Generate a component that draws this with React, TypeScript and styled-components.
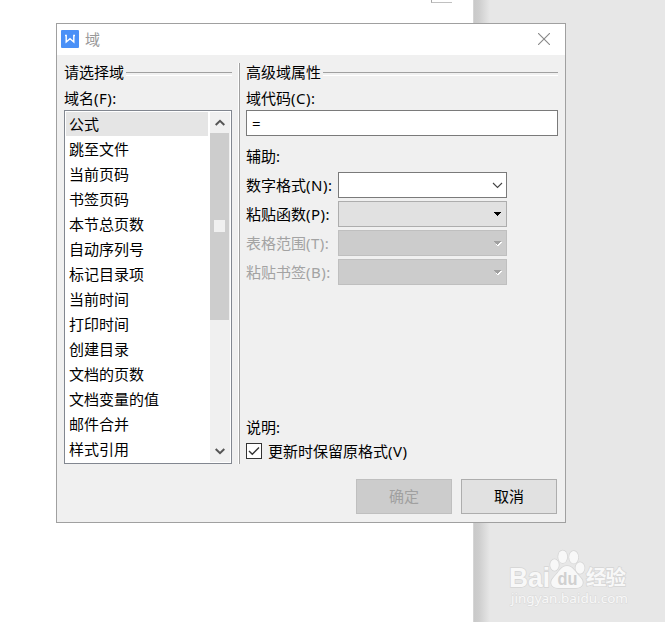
import React from 'react';
import styled, { createGlobalStyle } from 'styled-components';

const GlobalStyle = createGlobalStyle`
  * { box-sizing: border-box; }
  body {
    margin: 0;
    overflow: hidden;
    font-family: "Noto Sans", "Noto Sans CJK SC", sans-serif;
    font-size: 15px;
    color: #000;
  }
`;

const Desktop = styled.main`
  position: relative;
  display: flex;
  width: 665px;
  height: 622px;
  overflow: hidden;
  background: #e7e7e7;
`;

const Paper = styled.div`
  width: 473px;
  background: #fff;
`;

const PageCorner = styled.div`
  width: 21px;
  height: 3px;
  margin-left: 431px;
  border-left: 1px solid #a8a8a8;
  border-bottom: 1px solid #c0c0c0;
`;

const PaperShadow = styled.div`
  width: 17px;
  background: linear-gradient(to right, #d5d5d5 0 1px, #c9c9c9 1px, #cecece 6px, #e7e7e7);
`;

const Dialog = styled.section`
  position: absolute;
  left: 56px;
  top: 23px;
  width: 510px;
  height: 500px;
  border: 1px solid #a0a0a0;
  background: #f0f0f0;
`;

const TitleBar = styled.header`
  display: flex;
  align-items: center;
  height: 31px;
  padding: 0 15px 1px 4px;
  background: #fff;
  color: #999;
`;

const Title = styled.span`
  flex: 1;
  margin-left: 6px;
  line-height: 20px;
`;

const Body = styled.div`
  display: flex;
  height: 409px;
  padding: 8px 7px 0;
`;

const ListColumn = styled.div`
  width: 168px;
`;

const Divider = styled.div`
  width: 2px;
  height: 401px;
  margin: 0 6px;
  border-left: 1px solid #fff;
  border-right: 1px solid #a0a0a0;
`;

const DetailColumn = styled.div`
  width: 312px;
`;

const GroupHeading = styled.div`
  display: flex;
  height: 20px;
  line-height: 18px;
  white-space: nowrap;

  &::after {
    content: '';
    flex: 1;
    height: 2px;
    margin: 9px 0 0 2px;
    border-top: 1px solid #a0a0a0;
    border-bottom: 1px solid #fff;
  }
`;

const Label = styled.div<{ $top?: number; $bottom?: number; $muted?: boolean }>`
  height: 20px;
  margin-top: ${({ $top = 0 }) => $top}px;
  margin-bottom: ${({ $bottom = 0 }) => $bottom}px;
  line-height: 20px;
  white-space: nowrap;
  color: ${({ $muted }) => ($muted ? '#a3a3a3' : '#000')};
`;

const Hotkey = styled.span`
  letter-spacing: 0.5px;
`;

const ListBox = styled.div`
  display: flex;
  justify-content: space-between;
  height: 354px;
  padding: 1px;
  border: 1px solid #828790;
  background: #fff;
`;

const Items = styled.ul`
  width: 142px;
  margin: 0;
  padding: 0;
  list-style: none;
`;

const Item = styled.li<{ $selected: boolean }>`
  height: 25px;
  padding-left: 3px;
  line-height: 24px;
  white-space: nowrap;
  background: linear-gradient(${({ $selected }) => ($selected ? '#e5e5e5' : '#fff')} 24px, #fff 24px);
`;

const ScrollBar = styled.div`
  display: flex;
  flex-direction: column;
  width: 20px;
  height: 350px;
  background: #f0f0f0;
`;

const ScrollButton = styled.div`
  display: flex;
  align-items: center;
  justify-content: center;
  width: 19px;
  height: 21px;
`;

const Thumb = styled.div`
  display: flex;
  justify-content: center;
  width: 19px;
  height: 187px;
  margin-bottom: 120px;
  padding-top: 87px;
  background: #cdcdcd;
`;

const Grip = styled.div`
  width: 11px;
  height: 12px;
  background: #f0f0f0;
`;

const CodeInput = styled.div`
  height: 26px;
  padding-left: 5px;
  border: 1px solid #7a7a7a;
  background: #fff;
  line-height: 25px;
`;

const Fields = styled.div`
  display: grid;
  gap: 3px;
  margin-top: 6px;
`;

const Field = styled.div`
  display: flex;
  align-items: center;
  justify-content: space-between;
  width: 261px;
  height: 26px;
`;

type Kind = 'edit' | 'drop' | 'disabled';
const selectColors: Record<Kind, string> = {
  edit: 'background: #fff; border-color: #7a7a7a;',
  drop: 'background: #e1e1e1; border-color: #adadad;',
  disabled: 'background: #ccc; border-color: #bfbfbf;',
};

const Select = styled.div<{ $kind: Kind }>`
  display: flex;
  align-items: center;
  justify-content: flex-end;
  width: 169px;
  height: 26px;
  padding-right: 3px;
  border: 1px solid;
  ${({ $kind }) => selectColors[$kind]}
`;

const CheckRow = styled.div`
  display: flex;
  align-items: center;
  height: 20px;
  margin-top: 4px;
  line-height: 20px;
`;

const CheckBox = styled.span`
  display: flex;
  align-items: center;
  justify-content: center;
  width: 16px;
  height: 16px;
  margin-right: 6px;
  border: 1px solid #333;
  background: #fff;
`;

const Footer = styled.footer`
  display: flex;
  justify-content: flex-end;
  gap: 9px;
  margin-top: 15px;
  padding-right: 8px;
`;

const Button = styled.div<{ $disabled?: boolean }>`
  width: 96px;
  height: 35px;
  border: 1px solid ${({ $disabled }) => ($disabled ? '#bfbfbf' : '#adadad')};
  background: ${({ $disabled }) => ($disabled ? '#ccc' : '#e1e1e1')};
  color: ${({ $disabled }) => ($disabled ? '#a0a0a0' : '#000')};
  line-height: 33px;
  text-align: center;
`;

const Watermark = styled.div`
  position: absolute;
  left: 508px;
  top: 547px;
  width: 122px;
  height: 62px;
`;

const names = [
  '公式', '跳至文件', '当前页码', '书签页码', '本节总页数', '自动序列号', '标记目录项',
  '当前时间', '打印时间', '创建目录', '文档的页数', '文档变量的值', '邮件合并', '样式引用',
];

const fields: { label: string; hotkey: string; kind: Kind }[] = [
  { label: '数字格式', hotkey: '(N):', kind: 'edit' },
  { label: '粘贴函数', hotkey: '(P):', kind: 'drop' },
  { label: '表格范围', hotkey: '(T):', kind: 'disabled' },
  { label: '粘贴书签', hotkey: '(B):', kind: 'disabled' },
];

const Logo = () => (
  <svg width="18" height="18" viewBox="0 0 18 18">
    <rect width="18" height="18" rx="1" fill="#4a90f7" />
    <path d="M4 5.5h1.2V12L9 8.7l3.8 3.3V5.5H14" fill="none" stroke="#fff" strokeWidth="1.4" />
  </svg>
);

const CloseIcon = () => (
  <svg width="12" height="12" viewBox="0 0 12 12">
    <path d="M0 0L12 12M12 0L0 12" stroke="#888" strokeWidth="1.1" />
  </svg>
);

const Chevron = ({ up }: { up?: boolean }) => (
  <svg width="10" height="8" viewBox="0 0 10 8">
    <path d={up ? 'M.7 6L5 1.8 9.3 6' : 'M.7 2L5 6.2 9.3 2'} fill="none" stroke="#555" strokeWidth="2" />
  </svg>
);

const SelectArrow = ({ kind }: { kind: Kind }) => (
  <svg width="11" height="8" viewBox="0 0 11 8" shapeRendering={kind === 'edit' ? 'auto' : 'crispEdges'}>
    {kind === 'edit' && <path d="M1 2l4.5 4.5L10 2" fill="none" stroke="#444" strokeWidth="1.1" />}
    {kind === 'disabled' && <path d="M3 3h7L6.5 7H5z" fill="#fff" />}
    {kind !== 'edit' && <path d="M2 2h7L5.5 6z" fill={kind === 'drop' ? '#000' : '#a0a0a0'} />}
  </svg>
);

const WatermarkArt = () => (
  <svg width="122" height="62" viewBox="0 0 122 62" fill="#f8f8f8" stroke="#d5d5d5" strokeWidth="1.4" paintOrder="stroke" fontFamily='"Noto Sans", "Noto Sans CJK SC", sans-serif'>
    <text x="1" y="39.5" fontSize="27" fontWeight="700" fontFamily='"Liberation Sans", sans-serif' textLength="41" lengthAdjust="spacingAndGlyphs">Bai</text>
    <ellipse cx="46.5" cy="18" rx="4.3" ry="5.7" />
    <ellipse cx="54.7" cy="9.7" rx="4.5" ry="6.3" />
    <ellipse cx="65.7" cy="10.2" rx="4.5" ry="6.3" />
    <ellipse cx="72" cy="21" rx="4.5" ry="5.8" />
    <path d="M59 19c6 0 8 6 13 11s3 11-4 11H50c-7 0-9-6-4-11s7-11 13-11z" />
    <text x="49.5" y="38" fontSize="18" fontWeight="700" fontFamily='"Liberation Sans", sans-serif' textLength="20" lengthAdjust="spacingAndGlyphs" fill="#d0d0d0" stroke="none">du</text>
    <text x="78" y="38" fontSize="20.5" fontWeight="700" textLength="40">经验</text>
    <text x="3" y="56" fontSize="12.5" textLength="117" lengthAdjust="spacingAndGlyphs" stroke="#dadada" strokeWidth="1">jingyan.baidu.com</text>
  </svg>
);

export default function App() {
  return (
    <>
      <GlobalStyle />
      <Desktop>
        <Paper><PageCorner /></Paper>
        <PaperShadow />
        <Dialog>
          <TitleBar>
            <Logo />
            <Title>域</Title>
            <CloseIcon />
          </TitleBar>
          <Body>
            <ListColumn>
              <GroupHeading>请选择域</GroupHeading>
              <Label $top={5} $bottom={2}>域名<Hotkey>(F):</Hotkey></Label>
              <ListBox>
                <Items>
                  {names.map((name, i) => <Item key={name} $selected={i === 0}>{name}</Item>)}
                </Items>
                <ScrollBar>
                  <ScrollButton><Chevron up /></ScrollButton>
                  <Thumb><Grip /></Thumb>
                  <ScrollButton><Chevron /></ScrollButton>
                </ScrollBar>
              </ListBox>
            </ListColumn>
            <Divider />
            <DetailColumn>
              <GroupHeading>高级域属性</GroupHeading>
              <Label $top={5} $bottom={2}>域代码<Hotkey>(C):</Hotkey></Label>
              <CodeInput>=</CodeInput>
              <Label $top={10}>辅助:</Label>
              <Fields>
                {fields.map(({ label, hotkey, kind }) => (
                  <Field key={label}>
                    <Label $muted={kind === 'disabled'}>{label}<Hotkey>{hotkey}</Hotkey></Label>
                    <Select $kind={kind}><SelectArrow kind={kind} /></Select>
                  </Field>
                ))}
              </Fields>
              <Label $top={132}>说明:</Label>
              <CheckRow>
                <CheckBox>
                  <svg width="12" height="12" viewBox="0 0 12 12">
                    <path d="M1 6l3.3 3.3L11 2.6" fill="none" stroke="#333" strokeWidth="1.4" />
                  </svg>
                </CheckBox>
                <span>更新时保留原格式<Hotkey>(V)</Hotkey></span>
              </CheckRow>
            </DetailColumn>
          </Body>
          <Footer>
            <Button $disabled>确定</Button>
            <Button>取消</Button>
          </Footer>
        </Dialog>
        <Watermark><WatermarkArt /></Watermark>
      </Desktop>
    </>
  );
}
